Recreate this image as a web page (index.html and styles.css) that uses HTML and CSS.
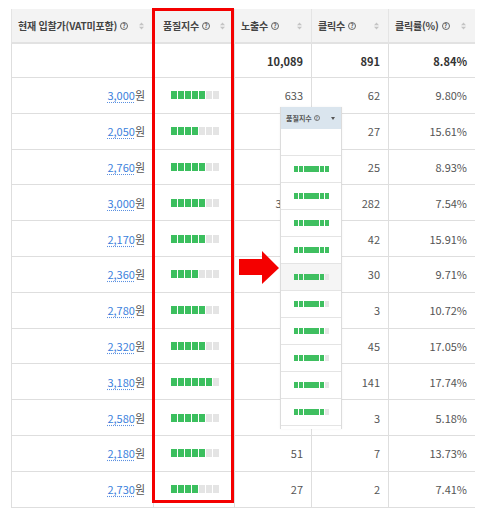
FILE: index.html
```html
<!DOCTYPE html>
<html lang="ko">
<head>
<meta charset="utf-8">
<link rel="stylesheet" href="styles.css">
</head>
<body>
<div class="page">
  <div class="grid">
    <div class="hc c1"><span class="lbl">현재 입찰가(VAT미포함)</span><span class="q">?</span><span class="sort"><svg width="5" height="8" viewBox="0 0 5 8"><path d="M0 3.2L2.5 0.4 5 3.2Z M0 4.8L2.5 7.6 5 4.8Z" fill="#c4c4c4"/></svg></span></div>
    <div class="hc c2"><span class="lbl">품질지수</span><span class="q">?</span><span class="sort"><svg width="5" height="8" viewBox="0 0 5 8"><path d="M0 3.2L2.5 0.4 5 3.2Z M0 4.8L2.5 7.6 5 4.8Z" fill="#c4c4c4"/></svg></span></div>
    <div class="hc"><span class="lbl">노출수</span><span class="q">?</span><span class="sort"><svg width="5" height="8" viewBox="0 0 5 8"><path d="M0 3.2L2.5 0.4 5 3.2Z M0 4.8L2.5 7.6 5 4.8Z" fill="#c4c4c4"/></svg></span></div>
    <div class="hc"><span class="lbl">클릭수</span><span class="q">?</span><span class="sort"><svg width="5" height="8" viewBox="0 0 5 8"><path d="M0 3.2L2.5 0.4 5 3.2Z M0 4.8L2.5 7.6 5 4.8Z" fill="#c4c4c4"/></svg></span></div>
    <div class="hc last"><span class="lbl">클릭률(%)</span><span class="q">?</span><span class="sort"><svg width="5" height="8" viewBox="0 0 5 8"><path d="M0 3.2L2.5 0.4 5 3.2Z M0 4.8L2.5 7.6 5 4.8Z" fill="#c4c4c4"/></svg></span></div>

    <div class="tc"></div>
    <div class="tc"></div>
    <div class="tc num">10,089</div>
    <div class="tc num">891</div>
    <div class="tc num last">8.84%</div>

    <div class="bc num"><a class="bid">3,000</a>원</div><div class="bc bc2"><span class="bar"><i class="on"></i><i class="on"></i><i class="on"></i><i class="on"></i><i class="on"></i><i></i><i></i></span></div><div class="bc num">633</div><div class="bc num">62</div><div class="bc num last">9.80%</div>
    <div class="bc num"><a class="bid">2,050</a>원</div><div class="bc bc2"><span class="bar"><i class="on"></i><i class="on"></i><i class="on"></i><i class="on"></i><i></i><i></i><i></i></span></div><div class="bc num">173</div><div class="bc num">27</div><div class="bc num last">15.61%</div>
    <div class="bc num"><a class="bid">2,760</a>원</div><div class="bc bc2"><span class="bar"><i class="on"></i><i class="on"></i><i class="on"></i><i class="on"></i><i class="on"></i><i></i><i></i></span></div><div class="bc num">280</div><div class="bc num">25</div><div class="bc num last">8.93%</div>
    <div class="bc num"><a class="bid">3,000</a>원</div><div class="bc bc2"><span class="bar"><i class="on"></i><i class="on"></i><i class="on"></i><i class="on"></i><i class="on"></i><i></i><i></i></span></div><div class="bc num">3,740</div><div class="bc num">282</div><div class="bc num last">7.54%</div>
    <div class="bc num"><a class="bid">2,170</a>원</div><div class="bc bc2"><span class="bar"><i class="on"></i><i class="on"></i><i class="on"></i><i class="on"></i><i class="on"></i><i></i><i></i></span></div><div class="bc num">264</div><div class="bc num">42</div><div class="bc num last">15.91%</div>
    <div class="bc num"><a class="bid">2,360</a>원</div><div class="bc bc2"><span class="bar"><i class="on"></i><i class="on"></i><i class="on"></i><i class="on"></i><i></i><i></i><i></i></span></div><div class="bc num">309</div><div class="bc num">30</div><div class="bc num last">9.71%</div>
    <div class="bc num"><a class="bid">2,780</a>원</div><div class="bc bc2"><span class="bar"><i class="on"></i><i class="on"></i><i class="on"></i><i class="on"></i><i class="on"></i><i></i><i></i></span></div><div class="bc num">28</div><div class="bc num">3</div><div class="bc num last">10.72%</div>
    <div class="bc num"><a class="bid">2,320</a>원</div><div class="bc bc2"><span class="bar"><i class="on"></i><i class="on"></i><i class="on"></i><i class="on"></i><i class="on"></i><i></i><i></i></span></div><div class="bc num">264</div><div class="bc num">45</div><div class="bc num last">17.05%</div>
    <div class="bc num"><a class="bid">3,180</a>원</div><div class="bc bc2"><span class="bar"><i class="on"></i><i class="on"></i><i class="on"></i><i class="on"></i><i class="on"></i><i class="on"></i><i></i></span></div><div class="bc num">795</div><div class="bc num">141</div><div class="bc num last">17.74%</div>
    <div class="bc num"><a class="bid">2,580</a>원</div><div class="bc bc2"><span class="bar"><i class="on"></i><i class="on"></i><i class="on"></i><i class="on"></i><i class="on"></i><i></i><i></i></span></div><div class="bc num">58</div><div class="bc num">3</div><div class="bc num last">5.18%</div>
    <div class="bc num"><a class="bid">2,180</a>원</div><div class="bc bc2"><span class="bar"><i class="on"></i><i class="on"></i><i class="on"></i><i class="on"></i><i class="on"></i><i></i><i></i></span></div><div class="bc num">51</div><div class="bc num">7</div><div class="bc num last">13.73%</div>
    <div class="bc num"><a class="bid">2,730</a>원</div><div class="bc bc2"><span class="bar"><i class="on"></i><i class="on"></i><i class="on"></i><i class="on"></i><i></i><i></i><i></i></span></div><div class="bc num">27</div><div class="bc num">2</div><div class="bc num last">7.41%</div>
  </div>

  <div class="redbox"></div>

  <svg class="arrow" width="42" height="36" viewBox="0 0 42 36"><polygon points="1,9 24,9 24,1 41,18 24,34 24,25 1,25" fill="#f40000"/></svg>

  <div class="panel">
    <div class="ph"><span class="plbl">품질지수</span><span class="pq">?</span><span class="caret"></span></div>
    <div class="pr"></div>
    <div class="pr"><span class="pbar"><i></i><i></i><i></i><i></i><i></i><i></i><i></i></span></div>
    <div class="pr"><span class="pbar"><i></i><i></i><i></i><i></i><i></i><i></i><i></i></span></div>
    <div class="pr"><span class="pbar"><i></i><i></i><i></i><i></i><i></i><i></i><i></i></span></div>
    <div class="pr"><span class="pbar"><i></i><i></i><i></i><i></i><i></i><i></i><i></i></span></div>
    <div class="pr hl"><span class="pbar"><i></i><i></i><i></i><i></i><i></i><i></i><i class="off"></i></span></div>
    <div class="pr"><span class="pbar"><i></i><i></i><i></i><i></i><i></i><i></i><i class="off"></i></span></div>
    <div class="pr"><span class="pbar"><i></i><i></i><i></i><i></i><i></i><i></i><i class="off"></i></span></div>
    <div class="pr"><span class="pbar"><i></i><i></i><i></i><i></i><i></i><i></i><i class="off"></i></span></div>
    <div class="pr"><span class="pbar"><i></i><i></i><i></i><i></i><i></i><i></i><i class="off"></i></span></div>
    <div class="pr"><span class="pbar"><i></i><i></i><i></i><i></i><i></i><i></i><i class="off"></i></span></div>
  </div>
</div>
</body>
</html>
```

FILE: styles.css
```css
* { box-sizing: border-box; }
html, body { margin: 0; padding: 0; background: #fff; }
body {
  font-family: "Noto Sans CJK KR", "Noto Sans", sans-serif;
  font-size: 11px;
  color: #555;
  width: 489px;
  height: 513px;
  overflow: hidden;
}
.page {
  position: relative;
  padding: 9px 0 0 11px;
}
.grid {
  display: grid;
  grid-template-columns: 142px 81px 77px 77px 87px;
  grid-template-rows: 35px 34px repeat(12, 35.8px);
}
.hc, .tc, .bc {
  border-left: 1px solid #dedede;
  display: flex;
  align-items: center;
}
.hc {
  background: #f3f3f3;
  border-bottom: 2px solid #e2e2e2;
  border-left-color: #e4e4e4;
  padding: 0 9px 0 6px;
  font-size: 10px;
  font-weight: 700;
  color: #444;
  white-space: nowrap;
}
.hc.c2 { padding-left: 9px; }
.lbl { letter-spacing: -0.2px; }
.q {
  display: inline-flex;
  align-items: center;
  justify-content: center;
  width: 8px;
  height: 8px;
  margin-left: 3px;
  border: 0.8px solid #666;
  border-radius: 50%;
  font-size: 6px;
  font-weight: 700;
  line-height: 1;
  color: #555;
}
.sort { margin-left: auto; display: flex; }
.tc {
  border-bottom: 1px solid #dedede;
  font-weight: 700;
  color: #333;
}
.bc { border-bottom: 1px solid #dedede; }
.num { justify-content: flex-end; padding-right: 8px; }
.tc.num { padding-right: 8px; }
.bid {
  color: #3b7fdc;
  text-decoration: underline dotted #5a90e0;
  text-underline-offset: 2px;
}
.bc2 { justify-content: center; padding-left: 2px; }
.bar { display: flex; gap: 1px; }
.bar i { width: 6px; height: 8px; background: #e4e4e4; }
.bar i.on { background: #3bbf5e; }

.redbox {
  position: absolute;
  left: 152px;
  top: 8px;
  width: 82px;
  height: 495px;
  border: 3px solid #f40000;
}
.arrow {
  position: absolute;
  left: 238px;
  top: 250px;
}
.panel {
  position: absolute;
  left: 280px;
  top: 107px;
  width: 62px;
  background: #fff;
  border-left: 1px solid #dcdcdc;
  border-right: 1px solid #dcdcdc;
  padding-bottom: 3px;
  box-shadow: 0 0 2px rgba(0,0,0,0.06);
}
.ph {
  height: 22px;
  background: #dae5ee;
  display: flex;
  align-items: center;
  padding: 0 6px 0 5px;
  font-size: 7px;
  color: #555;
  font-weight: 700;
  white-space: nowrap;
}
.pq {
  display: inline-flex;
  align-items: center;
  justify-content: center;
  width: 6px;
  height: 6px;
  margin-left: 2px;
  border: 0.6px solid #777;
  border-radius: 50%;
  font-size: 4.5px;
  line-height: 1;
}
.caret {
  margin-left: auto;
  width: 0;
  height: 0;
  border-left: 2.5px solid transparent;
  border-right: 2.5px solid transparent;
  border-top: 3px solid #555;
}
.pr {
  height: 27px;
  border-bottom: 1px solid #e4e4e4;
  display: flex;
  align-items: center;
  justify-content: center;
  padding-left: 1px;
}
.pr.hl { background: #f5f5f5; }
.pbar { display: flex; gap: 0.8px; }
.pbar i { width: 4.4px; height: 6px; background: #3fbf60; }
.pbar i.off { background: #e6e6e6; }
```
